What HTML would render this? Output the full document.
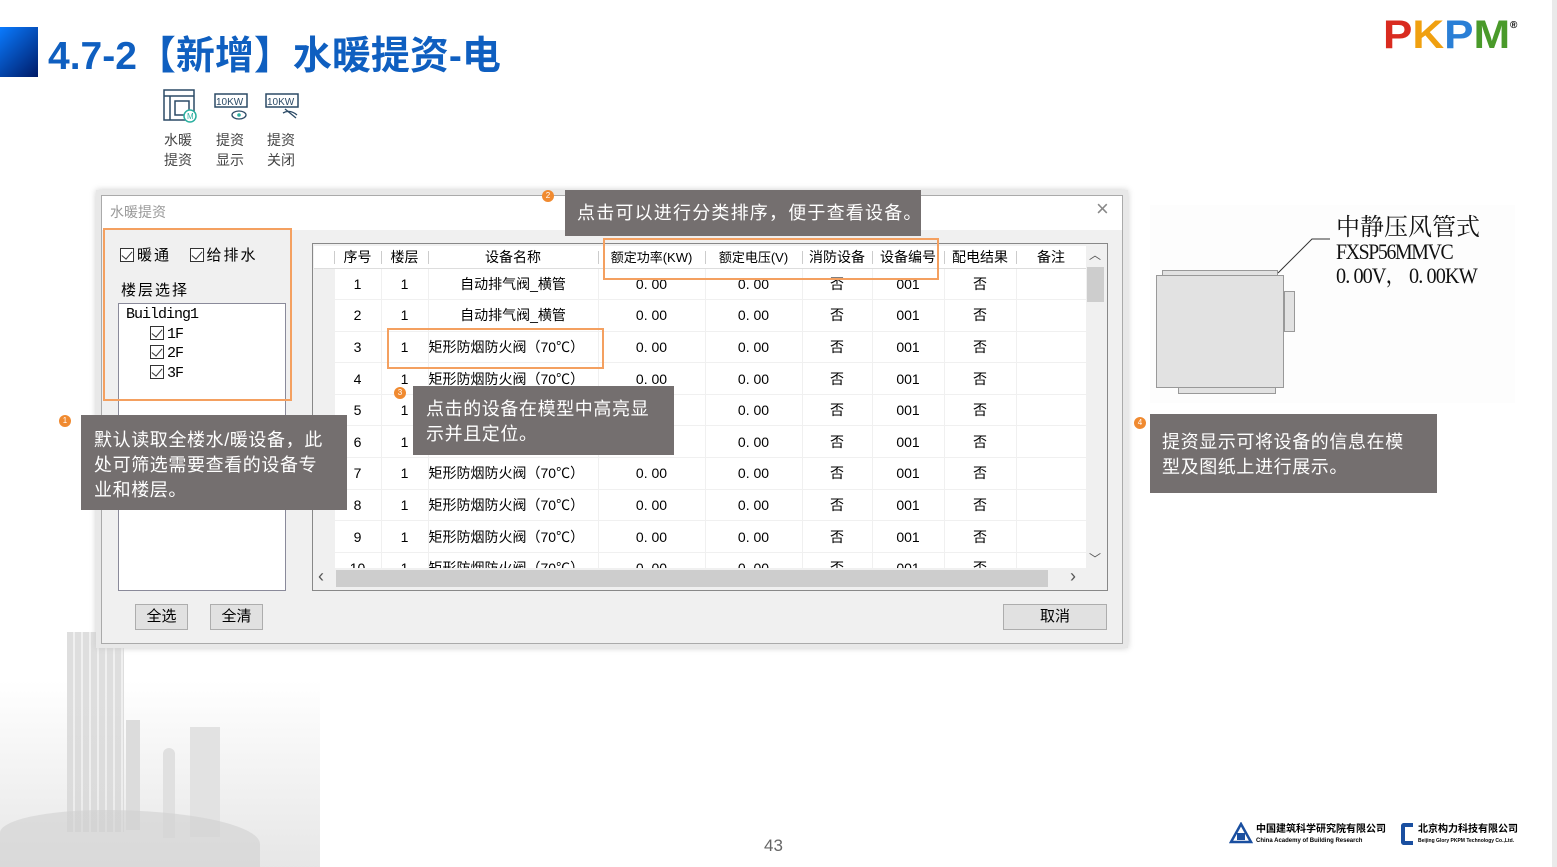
<!DOCTYPE html>
<html><head><meta charset="utf-8"><style>
*{margin:0;padding:0;box-sizing:border-box}
body{width:1557px;height:867px;position:relative;overflow:hidden;background:#fff;font-family:"Liberation Sans","Noto Sans CJK SC",sans-serif}
.a{position:absolute}
.call{position:absolute;background:#746f6f;color:#fff;font-size:18px;line-height:25px;font-family:"Liberation Sans","Noto Sans CJK SC",sans-serif;letter-spacing:0.6px;white-space:nowrap}
.dot{position:absolute;width:12px;height:12px;border-radius:50%;background:#f08a30;color:#fff;font-size:8px;line-height:12px;text-align:center}
.ob{position:absolute;border:2px solid #f4a060}
.cb{display:inline-block;width:14px;height:14px;border:1px solid #333;background:#fff;vertical-align:-2px;position:relative;margin-right:3px}
.cb:after{content:"";position:absolute;left:3px;top:0px;width:5px;height:9px;border:solid #333;border-width:0 1.5px 1.5px 0;transform:rotate(40deg)}
.btn{position:absolute;background:#e1e1e1;border:1px solid #adadad;font-size:15px;text-align:center;line-height:23px;color:#000}
table{border-collapse:collapse;table-layout:fixed;font-size:14px;color:#000}
td{text-align:center;border-right:1px solid #f0f0f0;border-bottom:1px solid #f0f0f0;height:31.6px;white-space:nowrap;overflow:hidden}
th{font-weight:normal;height:22px;font-size:14px;border-bottom:1px solid #ddd;position:relative;white-space:nowrap}
th+th:before{content:"";position:absolute;left:0;top:5px;height:13px;border-left:1px solid #ccc}
</style></head><body>
<div class="a" style="left:0;top:600px;width:320px;height:267px;background:linear-gradient(to top,#dcdcdc,rgba(255,255,255,0) 70%);opacity:.7"></div>
<div class="a" style="left:67px;top:632px;width:57px;height:200px;background:repeating-linear-gradient(90deg,#d6d6d6 0 6px,#ececec 6px 8px);opacity:.8"></div>
<div class="a" style="left:126px;top:720px;width:14px;height:110px;background:#dcdcdc"></div>
<div class="a" style="left:163px;top:748px;width:12px;height:90px;background:#e0e0e0;border-radius:6px 6px 0 0"></div>
<div class="a" style="left:190px;top:727px;width:30px;height:110px;background:#e2e2e2"></div>
<div class="a" style="left:0;top:810px;width:260px;height:57px;background:#d0d0d0;opacity:.6;border-radius:40% 60% 0 0"></div>
<div class="a" style="left:1552px;top:0;width:5px;height:867px;background:#eaeaea"></div>

<div class="a" style="left:0;top:27px;width:38px;height:50px;background:linear-gradient(135deg,#0a7bff,#001a66)"></div>
<div class="a" style="left:48px;top:25px;font-size:39px;font-weight:bold;color:#0f5fc0;white-space:nowrap">4.7-2【新增】水暖提资-电</div>
<div class="a" style="left:1383px;top:12px;font-size:40px;font-weight:900;font-family:'Liberation Sans',sans-serif;line-height:46px;transform:scaleX(1.1);transform-origin:left"><span style="color:#d92b1f">P</span><span style="color:#f0a010">K</span><span style="color:#2a7fd6">P</span><span style="color:#4a9a2a">M</span></div>
<div class="a" style="left:1510px;top:20px;font-size:10px;font-weight:bold">®</div>

<svg class="a" style="left:162px;top:88px" width="140" height="40">
<g fill="none" stroke="#2b4a66" stroke-width="1.5">
<rect x="2" y="2" width="30" height="30"/><line x1="2" y1="8" x2="32" y2="8"/><line x1="8" y1="8" x2="8" y2="32"/><rect x="13" y="13" width="14" height="14"/>
</g><circle cx="28" cy="28" r="6" fill="#fff" stroke="#2bb0a0" stroke-width="1.5"/>
<text x="25" y="31" font-size="8" fill="#2bb0a0">M</text>
<rect x="53" y="6" width="32" height="13" fill="#fff" stroke="#2b4a66" stroke-width="1.5"/><text x="54" y="17" font-size="10" fill="#2b4a66">10KW</text>
<ellipse cx="77" cy="27" rx="7" ry="4" fill="none" stroke="#2b4a66" stroke-width="1.3"/><circle cx="77" cy="27" r="1.8" fill="#2bb0a0"/>
<rect x="104" y="6" width="32" height="13" fill="#fff" stroke="#2b4a66" stroke-width="1.5"/><text x="105" y="17" font-size="10" fill="#2b4a66">10KW</text>
<path d="M121 25 q7 -4 14 2 M123 21 l11 9" fill="none" stroke="#2b4a66" stroke-width="1.3"/>
</svg>
<div class="a" style="left:164px;top:130px;font-size:14px;line-height:20px;color:#444">水暖<br>提资</div>
<div class="a" style="left:216px;top:130px;font-size:14px;line-height:20px;color:#444">提资<br>显示</div>
<div class="a" style="left:267px;top:130px;font-size:14px;line-height:20px;color:#444">提资<br>关闭</div>

<div class="a" style="left:96px;top:190px;width:1032px;height:458px;background:#e8e8e8;box-shadow:0 0 6px #ccc"></div>
<div class="a" style="left:101px;top:195px;width:1022px;height:449px;background:#f0f0f0;border:1px solid #aaa"></div>
<div class="a" style="left:102px;top:196px;width:1020px;height:34px;background:#fff"></div>
<div class="a" style="left:110px;top:202px;font-size:14px;color:#999">水暖提资</div>
<div class="a" style="left:1096px;top:196px;font-size:22px;color:#888;font-weight:lighter">×</div>

<div class="a" style="left:120px;top:244px;font-size:15px;color:#000;white-space:nowrap;letter-spacing:2px"><span class="cb"></span>暖通&nbsp;&nbsp;&nbsp;<span class="cb"></span>给排水</div>
<div class="a" style="left:121px;top:279px;font-size:15px;letter-spacing:2px">楼层选择</div>
<div class="a" style="left:118px;top:303px;width:168px;height:288px;background:#fff;border:1px solid #8a8a9a"></div>
<div class="a" style="left:126px;top:305px;font-size:15px;line-height:19.5px;font-family:'Liberation Mono','Noto Serif CJK SC',monospace;letter-spacing:-1px">Building1<br>&nbsp;&nbsp;&nbsp;<span class="cb"></span>1F<br>&nbsp;&nbsp;&nbsp;<span class="cb"></span>2F<br>&nbsp;&nbsp;&nbsp;<span class="cb"></span>3F</div>
<div class="ob" style="left:103px;top:228px;width:189px;height:173px"></div>
<div class="btn" style="left:135px;top:604px;width:53px;height:26px">全选</div>
<div class="btn" style="left:210px;top:604px;width:53px;height:26px">全清</div>
<div class="btn" style="left:1003px;top:604px;width:104px;height:26px">取消</div>

<div class="a" style="left:312px;top:243px;width:796px;height:348px;border:1px solid #888;background:#f0f0f0"></div>
<div class="a" style="left:314px;top:246px;width:772px;height:322px;background:#fff;overflow:hidden">
<table style="width:772px">
<colgroup><col style="width:20px"><col style="width:47px"><col style="width:47px"><col style="width:170px"><col style="width:107px"><col style="width:97px"><col style="width:70px"><col style="width:72px"><col style="width:72px"><col style="width:70px"></colgroup>
<tr><th></th><th>序号</th><th>楼层</th><th>设备名称</th><th style="font-size:13px">额定功率(KW)</th><th style="font-size:13px">额定电压(V)</th><th>消防设备</th><th>设备编号</th><th>配电结果</th><th>备注</th></tr>
<tr><td style="background:#f0f0f0"></td><td>1</td><td>1</td><td>自动排气阀_横管</td><td>0. 00</td><td>0. 00</td><td>否</td><td>001</td><td>否</td><td></td></tr>
<tr><td style="background:#f0f0f0"></td><td>2</td><td>1</td><td>自动排气阀_横管</td><td>0. 00</td><td>0. 00</td><td>否</td><td>001</td><td>否</td><td></td></tr>
<tr><td style="background:#f0f0f0"></td><td>3</td><td>1</td><td style="text-align:left">矩形防烟防火阀（70℃）</td><td>0. 00</td><td>0. 00</td><td>否</td><td>001</td><td>否</td><td></td></tr>
<tr><td style="background:#f0f0f0"></td><td>4</td><td>1</td><td style="text-align:left">矩形防烟防火阀（70℃）</td><td>0. 00</td><td>0. 00</td><td>否</td><td>001</td><td>否</td><td></td></tr>
<tr><td style="background:#f0f0f0"></td><td>5</td><td>1</td><td style="text-align:left">矩形防烟防火阀（70℃）</td><td>0. 00</td><td>0. 00</td><td>否</td><td>001</td><td>否</td><td></td></tr>
<tr><td style="background:#f0f0f0"></td><td>6</td><td>1</td><td style="text-align:left">矩形防烟防火阀（70℃）</td><td>0. 00</td><td>0. 00</td><td>否</td><td>001</td><td>否</td><td></td></tr>
<tr><td style="background:#f0f0f0"></td><td>7</td><td>1</td><td style="text-align:left">矩形防烟防火阀（70℃）</td><td>0. 00</td><td>0. 00</td><td>否</td><td>001</td><td>否</td><td></td></tr>
<tr><td style="background:#f0f0f0"></td><td>8</td><td>1</td><td style="text-align:left">矩形防烟防火阀（70℃）</td><td>0. 00</td><td>0. 00</td><td>否</td><td>001</td><td>否</td><td></td></tr>
<tr><td style="background:#f0f0f0"></td><td>9</td><td>1</td><td style="text-align:left">矩形防烟防火阀（70℃）</td><td>0. 00</td><td>0. 00</td><td>否</td><td>001</td><td>否</td><td></td></tr>
<tr><td style="background:#f0f0f0"></td><td>10</td><td>1</td><td style="text-align:left">矩形防烟防火阀（70℃）</td><td>0. 00</td><td>0. 00</td><td>否</td><td>001</td><td>否</td><td></td></tr>
</table></div>
<div class="a" style="left:1086px;top:246px;width:20px;height:322px;background:#f0f0f0"></div>
<div class="a" style="left:1087px;top:267px;width:17px;height:35px;background:#cdcdcd"></div>
<div class="a" style="left:1089px;top:246px;font-size:12px;color:#555">︿</div>
<div class="a" style="left:1089px;top:550px;font-size:12px;color:#555">﹀</div>
<div class="a" style="left:314px;top:568px;width:772px;height:20px;background:#f0f0f0"></div>
<div class="a" style="left:336px;top:570px;width:712px;height:17px;background:#cdcdcd"></div>
<div class="a" style="left:318px;top:566px;font-size:18px;color:#555">‹</div>
<div class="a" style="left:1070px;top:566px;font-size:18px;color:#555">›</div>

<div class="ob" style="left:603px;top:238px;width:336px;height:42px"></div>
<div class="ob" style="left:387px;top:328px;width:217px;height:41px"></div>

<div class="a" style="left:1150px;top:205px;width:365px;height:198px;background:#fdfdfd"></div>
<div class="a" style="left:1162px;top:270px;width:116px;height:6px;background:#e2e2e2;border:1px solid #999"></div>
<div class="a" style="left:1156px;top:275px;width:128px;height:113px;background:#e2e2e2;border:1px solid #999"></div>
<div class="a" style="left:1284px;top:291px;width:11px;height:41px;background:#e2e2e2;border:1px solid #999"></div>
<div class="a" style="left:1178px;top:387px;width:98px;height:7px;background:#e2e2e2;border:1px solid #999"></div>
<svg class="a" style="left:1275px;top:235px" width="60" height="40"><path d="M3 38 L37 4 L55 4" fill="none" stroke="#333" stroke-width="1"/></svg>
<div class="a" style="left:1336px;top:216px;font-size:24px;line-height:24px;font-family:'Liberation Serif','Noto Serif CJK SC',serif;color:#111;white-space:nowrap">中静压风管式<br><span style="font-size:22px;letter-spacing:-1.5px;display:inline-block;transform:scaleX(.9);transform-origin:left">FXSP56MMVC</span><br><span style="font-size:22px;letter-spacing:-1px;display:inline-block;transform:scaleX(.92);transform-origin:left">0. 00V， 0. 00KW</span></div>

<div class="dot" style="left:59px;top:415px">1</div>
<div class="call" style="left:81px;top:415px;width:266px;height:95px;padding:13px 0 0 13px">默认读取全楼水/暖设备，此<br>处可筛选需要查看的设备专<br>业和楼层。</div>
<div class="dot" style="left:542px;top:190px">2</div>
<div class="call" style="left:565px;top:190px;width:356px;height:46px;padding:11px 0 0 12px;letter-spacing:1.2px">点击可以进行分类排序，便于查看设备。</div>
<div class="dot" style="left:394px;top:387px">3</div>
<div class="call" style="left:413px;top:386px;width:261px;height:69px;padding:11px 0 0 13px">点击的设备在模型中高亮显<br>示并且定位。</div>
<div class="dot" style="left:1134px;top:417px">4</div>
<div class="call" style="left:1150px;top:414px;width:287px;height:79px;padding:16px 0 0 12px">提资显示可将设备的信息在模<br>型及图纸上进行展示。</div>

<div class="a" style="left:764px;top:836px;font-size:17px;color:#666">43</div>

<svg class="a" style="left:1229px;top:822px" width="24" height="24"><path d="M12 2 L22 20 L2 20 Z" fill="none" stroke="#1a4fa0" stroke-width="2.5"/><rect x="8" y="11" width="8" height="7" fill="#1a4fa0"/></svg>
<div class="a" style="left:1256px;top:825px;font-size:10px;font-weight:bold;color:#000;white-space:nowrap;line-height:10px">中国建筑科学研究院有限公司<br><span style="font-size:6px">China Academy of Building Research</span></div>
<div class="a" style="left:1401px;top:823px;width:12px;height:22px;border:4px solid #1a4fa0;border-right:none;border-radius:3px 0 0 3px"></div>
<div class="a" style="left:1418px;top:825px;font-size:10px;font-weight:bold;color:#000;white-space:nowrap;line-height:10px">北京构力科技有限公司<br><span style="font-size:5px">Beijing Glory PKPM Technology Co.,Ltd.</span></div>
</body></html>
